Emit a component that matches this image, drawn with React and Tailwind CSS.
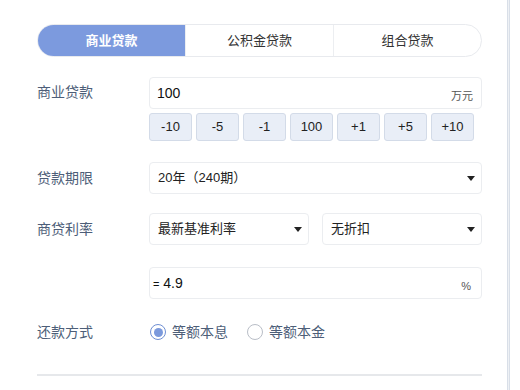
import React, { useState } from "react";

const font = { fontFamily: '"Liberation Sans", "Noto Sans CJK SC", sans-serif' };

function Caret() {
  return (
    <svg width="8" height="5" viewBox="0 0 8 5" className="shrink-0">
      <path d="M0 0 H8 L4 5 Z" fill="#222" />
    </svg>
  );
}

function Select({ value, className = "" }) {
  return (
    <div
      className={`flex h-[32px] items-center justify-between rounded-[4px] border border-[#ebedf0] bg-white pl-[8px] pr-[6px] text-[13px] text-[#222] ${className}`}
    >
      <span>{value}</span>
      <Caret />
    </div>
  );
}

function Radio({ checked, label }) {
  return (
    <div className="flex items-center gap-[6px]">
      <span
        className={`flex h-[16px] w-[16px] items-center justify-center rounded-full border ${
          checked ? "border-[#6f8fd3]" : "border-[#b9bec7]"
        } bg-white`}
      >
        {checked && <span className="h-[9px] w-[9px] rounded-full bg-[#7b99dc]" />}
      </span>
      <span className="text-[14px] text-[#4d5e78]">{label}</span>
    </div>
  );
}

export default function App() {
  const [tab, setTab] = useState(0);
  const tabs = ["商业贷款", "公积金贷款", "组合贷款"];
  const steps = ["-10", "-5", "-1", "100", "+1", "+5", "+10"];

  return (
    <div className="flex h-[390px] w-[520px] bg-white" style={font}>
      <div className="w-[507px] pl-[37px] pt-[24px]">
        <div className="w-[445px]">
          {/* tabs */}
          <div className="flex h-[33px] overflow-hidden rounded-full border border-[#e8eaee]">
            {tabs.map((t, i) => (
              <button
                key={t}
                onClick={() => setTab(i)}
                className={`flex-1 text-[13px] ${
                  tab === i
                    ? "bg-[#7c9ade] font-bold text-white"
                    : "text-[#333]"
                } ${i > 0 ? "border-l border-[#eceef1]" : ""}`}
              >
                {t}
              </button>
            ))}
          </div>

          {/* amount */}
          <div className="mt-[20px] flex">
            <div className="w-[112px] pt-[5px] text-[14px] text-[#4d5e78]">商业贷款</div>
            <div className="flex-1">
              <div className="flex h-[32px] items-center justify-between rounded-[4px] border border-[#ebedf0] pl-[7px] pr-[8px]">
                <span className="text-[14px] text-[#111]">100</span>
                <span className="mt-[6px] text-[11px] text-[#555]">万元</span>
              </div>
              <div className="mt-[4px] flex gap-[4px]">
                {steps.map((s) => (
                  <button
                    key={s}
                    className="h-[28px] w-[43px] rounded-[3px] border border-[#d3dbe8] bg-[#e9eef7] text-[13px] text-[#222]"
                  >
                    {s}
                  </button>
                ))}
              </div>
            </div>
          </div>

          {/* term */}
          <div className="mt-[21px] flex items-center">
            <div className="w-[112px] text-[14px] text-[#4d5e78]">贷款期限</div>
            <Select value="20年（240期）" className="flex-1" />
          </div>

          {/* rate */}
          <div className="mt-[19px] flex items-center">
            <div className="w-[112px] text-[14px] text-[#4d5e78]">商贷利率</div>
            <div className="flex flex-1 gap-[13px]">
              <Select value="最新基准利率" className="flex-1" />
              <Select value="无折扣" className="flex-1" />
            </div>
          </div>

          <div className="mt-[22px] flex">
            <div className="w-[112px]" />
            <div className="flex h-[32px] flex-1 items-center justify-between rounded-[4px] border border-[#ebedf0] pl-[3px] pr-[10px]">
              <span className="text-[14px] text-[#111]">
                <span className="text-[11px]">=</span> 4.9
              </span>
              <span className="mt-[6px] text-[11px] text-[#555]">%</span>
            </div>
          </div>

          {/* repayment */}
          <div className="mt-[23px] flex h-[20px] items-center">
            <div className="w-[112px] text-[14px] text-[#4d5e78]">还款方式</div>
            <div className="flex gap-[19px] pl-[1px]">
              <Radio checked label="等额本息" />
              <Radio label="等额本金" />
            </div>
          </div>

          <div className="mt-[32px] h-[2px] bg-[#e6e8eb]" />
        </div>
      </div>
      <div className="h-full w-[3px] border-x border-[#d9dfe8] bg-[#eef1f5]" />
    </div>
  );
}
